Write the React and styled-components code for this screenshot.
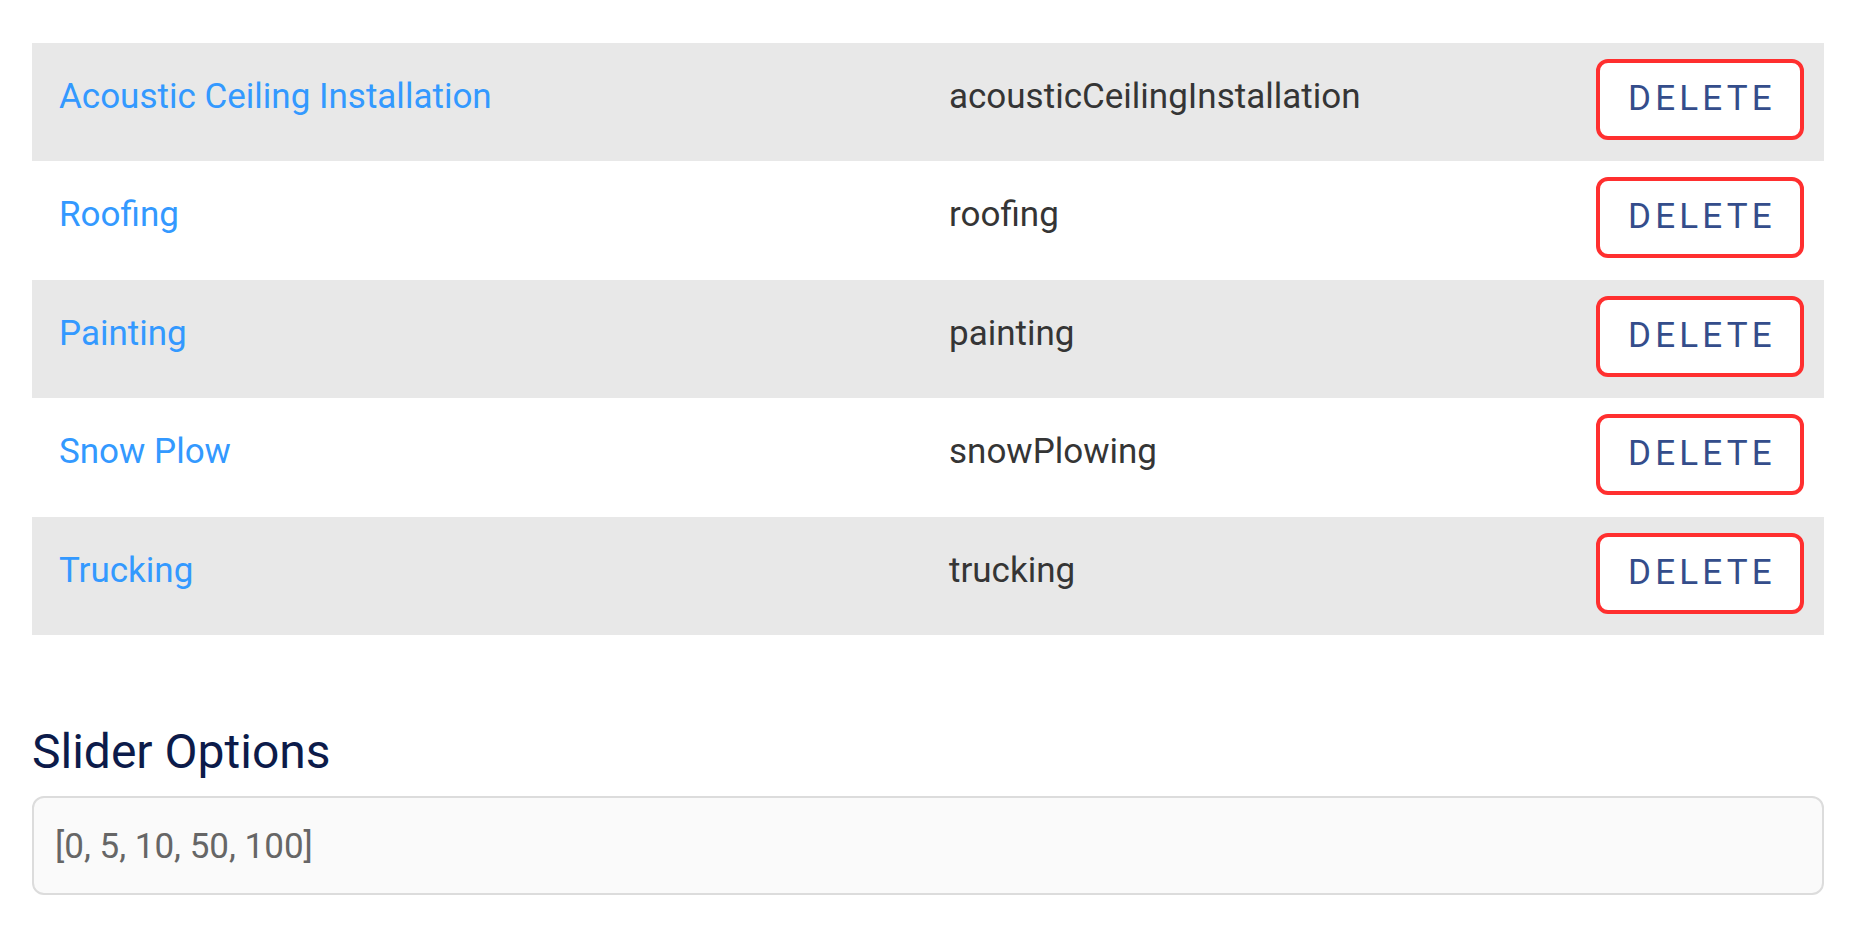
import React from "react";
import styled, { createGlobalStyle } from "styled-components";

const GlobalStyle = createGlobalStyle`
    body {
        margin: 0;
        background: #fff;
        font-family: Roboto, "Liberation Sans", sans-serif;
    }
`;

const Page = styled.div`
    padding: 43px 34px 40px 32px;
`;

const List = styled.div`
    display: flex;
    flex-direction: column;
`;

const Row = styled.div`
    display: grid;
    grid-template-columns: 890px 1fr 208px;
    align-items: center;
    padding: 16px 20px 21.4px 27px;
    background: ${(props) => (props.shaded ? "#e8e8e8" : "#fff")};
`;

const NameLink = styled.a`
    margin-bottom: 6px;
    font-size: 35px;
    color: #3399ff;
    text-decoration: none;
    cursor: pointer;
`;

const Key = styled.span`
    margin-bottom: 6px;
    font-size: 35px;
    color: #353535;
`;

const DeleteButton = styled.button`
    box-sizing: border-box;
    width: 208px;
    height: 81px;
    padding: 0 0 2px 4px;
    border: 4px solid #ff2f2f;
    border-radius: 12px;
    background: #fff;
    font-family: Roboto, "Liberation Sans", sans-serif;
    font-size: 35px;
    letter-spacing: 0.12em;
    text-transform: uppercase;
    color: #344d8b;
    cursor: pointer;
`;

const SectionTitle = styled.h2`
    margin: 88px 0 16px;
    font-size: 48px;
    font-weight: 400;
    line-height: normal;
    color: #0c1b4a;
`;

const OptionsInput = styled.input`
    box-sizing: border-box;
    display: block;
    width: 100%;
    height: 99px;
    padding: 3px 21px 0;
    border: 2px solid #dcdcdc;
    border-radius: 12px;
    background: #fafafa;
    font-family: Roboto, "Liberation Sans", sans-serif;
    font-size: 35px;
    color: #666;
    outline: none;
`;

const services = [
    { name: "Acoustic Ceiling Installation", key: "acousticCeilingInstallation" },
    { name: "Roofing", key: "roofing" },
    { name: "Painting", key: "painting" },
    { name: "Snow Plow", key: "snowPlowing" },
    { name: "Trucking", key: "trucking" },
];

const App = () => {
    return (
        <Page>
            <GlobalStyle />
            <List>
                {services.map((service, i) => (
                    <Row key={service.key} shaded={i % 2 === 0}>
                        <NameLink href={`#${service.key}`}>{service.name}</NameLink>
                        <Key>{service.key}</Key>
                        <DeleteButton>Delete</DeleteButton>
                    </Row>
                ))}
            </List>
            <SectionTitle>Slider Options</SectionTitle>
            <OptionsInput readOnly value="[0, 5, 10, 50, 100]" />
        </Page>
    );
};

export default App;
